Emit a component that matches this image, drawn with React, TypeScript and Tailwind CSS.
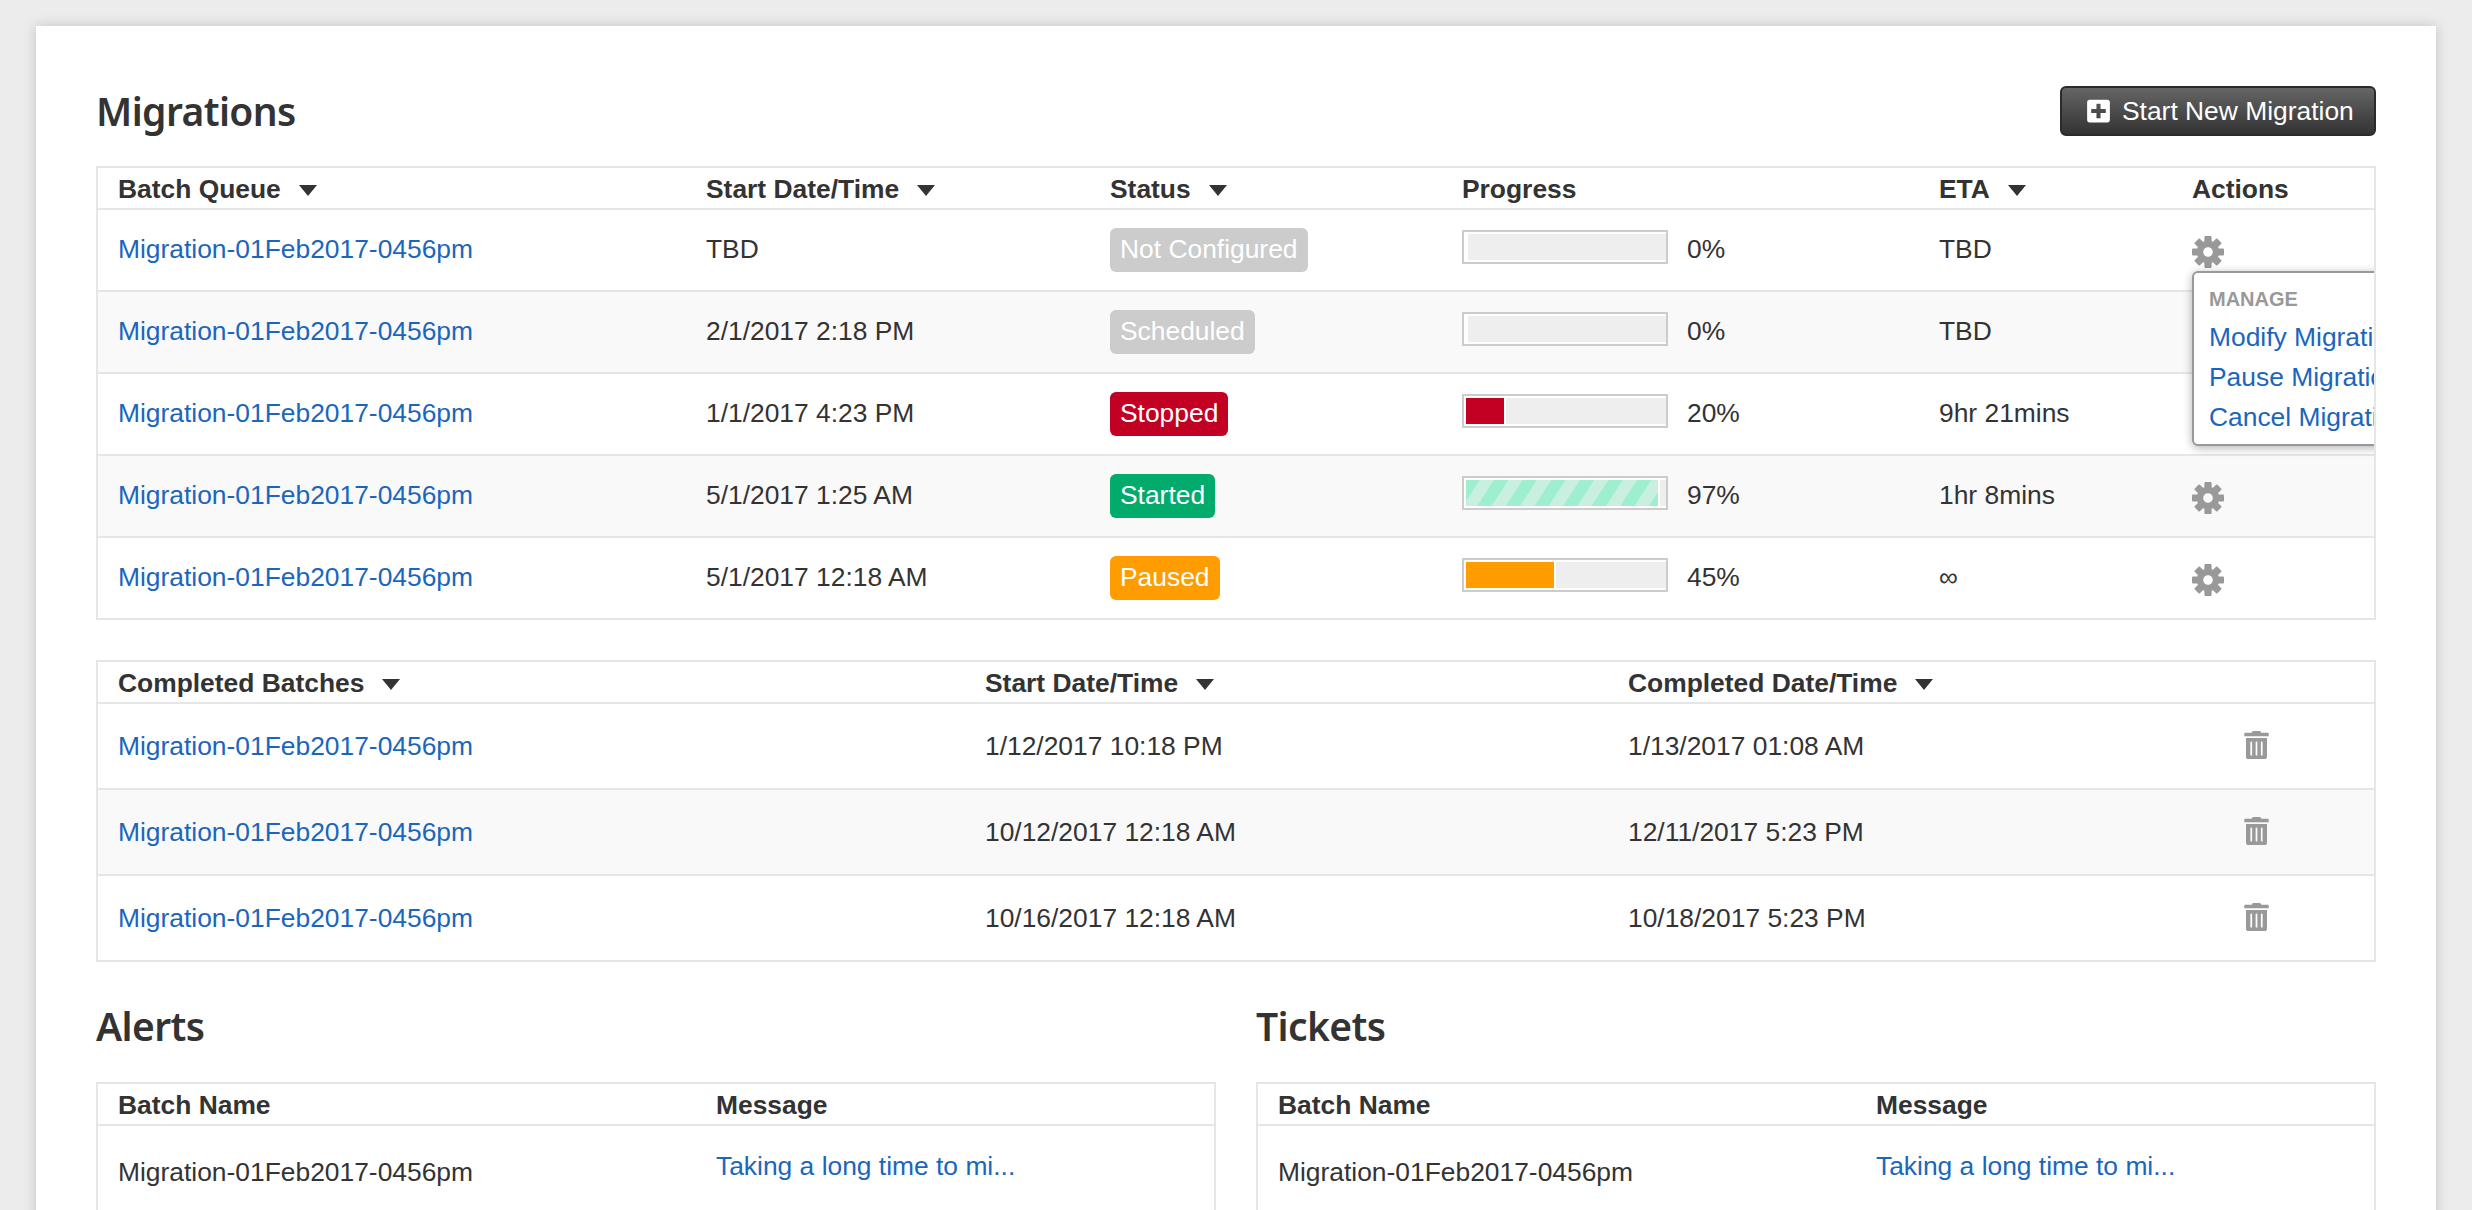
import React from "react";
import { FaTrashAlt, FaPlusSquare } from "react-icons/fa";

const NAME = "Migration-01Feb2017-0456pm";

function Caret() {
  return (
    <svg viewBox="0 0 18 11" className="ml-[18px] mt-[3px] h-[11px] w-[18px] shrink-0 fill-[#333333]">
      <path d="M0 0H18L9 11Z" />
    </svg>
  );
}

function Gear() {
  return (
    <svg viewBox="0 0 32 32" className="mt-[3px] h-[32px] w-[32px] fill-[#999999] stroke-[#999999]">
      <circle cx="16" cy="16" r="8" fill="none" strokeWidth="6.4" />
      <g stroke="none">
        {[0, 45, 90, 135, 180, 225, 270, 315].map((a) => (
          <rect key={a} x="12.4" y="0" width="7.2" height="8" rx="1" transform={`rotate(${a} 16 16)`} />
        ))}
      </g>
    </svg>
  );
}

function Head({ label, sort }: { label: string; sort?: boolean }) {
  return (
    <div className="flex items-center font-bold">
      <span>{label}</span>
      {sort ? <Caret /> : null}
    </div>
  );
}

const badgeClass: Record<string, string> = {
  "Not Configured": "bg-[#cccccc]",
  Scheduled: "bg-[#cccccc]",
  Stopped: "bg-[#c20024]",
  Started: "bg-[#00ab6b]",
  Paused: "bg-[#ff9d00]",
};

const fillClass: Record<string, string> = {
  "Not Configured": "bg-white",
  Scheduled: "bg-white",
  Stopped: "bg-[#c20024]",
  Started: "bg-[repeating-linear-gradient(123deg,#9eefcf_0px,#9eefcf_11px,#c8efe0_12px,#c8efe0_23px,#9eefcf_24px)]",
  Paused: "bg-[#ff9d00]",
};

const queue = [
  { start: "TBD", status: "Not Configured", pct: 0, eta: "TBD" },
  { start: "2/1/2017 2:18 PM", status: "Scheduled", pct: 0, eta: "TBD" },
  { start: "1/1/2017 4:23 PM", status: "Stopped", pct: 20, eta: "9hr 21mins" },
  { start: "5/1/2017 1:25 AM", status: "Started", pct: 97, eta: "1hr 8mins" },
  { start: "5/1/2017 12:18 AM", status: "Paused", pct: 45, eta: "∞" },
];

const done = [
  { start: "1/12/2017 10:18 PM", end: "1/13/2017 01:08 AM" },
  { start: "10/12/2017 12:18 AM", end: "12/11/2017 5:23 PM" },
  { start: "10/16/2017 12:18 AM", end: "10/18/2017 5:23 PM" },
];

function Progress({ status, pct }: { status: string; pct: number }) {
  return (
    <div className="flex items-center">
      <div className="mb-[6px] h-[34px] w-[206px] border-2 border-[#cccccc] bg-white py-[2px] pl-[2px]">
        <div className="h-[26px] w-full bg-[#eeeeee]">
          <div
            className={`h-full border-r-2 border-white ${fillClass[status]}`}
            style={{ width: `${pct}%` }}
          />
        </div>
      </div>
      <span className="ml-[19px] pb-[2px]">{pct}%</span>
    </div>
  );
}

function SmallTable({ message }: { message: string }) {
  return (
    <div className="h-[200px] border-2 border-[#e6e6e6]">
      <div className="grid h-[42px] grid-cols-[598px_1fr] items-center border-b-2 border-[#e6e6e6] pt-[2px] pl-5 font-bold">
        <div>Batch Name</div>
        <div>Message</div>
      </div>
      <div className="grid grid-cols-[598px_1fr] pl-5">
        <div className="pt-[31px]">{NAME}</div>
        <div className="pt-[25px] text-[#1a66bd]">{message}</div>
      </div>
    </div>
  );
}

export default function App() {
  return (
    <div className="h-[1210px] overflow-hidden bg-[#ececec] px-9 pt-[26px] font-['Liberation_Sans',Arial,sans-serif] text-[26.4px] leading-[30px] text-[#333333]">
      <div className="bg-white px-[60px] pt-[60px] shadow-[0_0_12px_rgba(0,0,0,0.18)]">
        <div className="mb-[30px] flex h-[50px] items-center justify-between">
          <h1 className="font-['Noto_Sans',sans-serif] text-[39px] leading-[50px] font-semibold tracking-[-0.6px] text-[#333333]">
            Migrations
          </h1>
          <button className="flex h-[50px] w-[316px] items-center rounded-[6px] border-2 border-[#2b2b2b] bg-gradient-to-b from-[#666666] to-[#333333] pl-[25px] text-white">
            <FaPlusSquare className="h-[26px] w-[23px]" />
            <span className="ml-[12px]">Start New Migration</span>
          </button>
        </div>

        <div className="relative overflow-hidden border-2 border-[#e6e6e6]">
          <div className="grid h-[42px] grid-cols-[588px_404px_352px_477px_253px_1fr] items-center border-b-2 border-[#e6e6e6] pt-[2px] pl-5">
            <Head label="Batch Queue" sort />
            <Head label="Start Date/Time" sort />
            <Head label="Status" sort />
            <Head label="Progress" />
            <Head label="ETA" sort />
            <Head label="Actions" />
          </div>
          {queue.map((r, i) => (
            <div
              key={r.status}
              className={`grid grid-cols-[588px_404px_352px_477px_253px_1fr] items-center pl-5 ${
                i === 4 ? "h-[80px]" : "h-[82px] border-b-2 border-[#e6e6e6]"
              } ${i % 2 === 1 ? "bg-[#f9f9f9]" : "bg-white"}`}
            >
              <div className="pb-[2px] text-[#1a66bd]">{NAME}</div>
              <div className="pb-[2px]">{r.start}</div>
              <div>
                <span className={`inline-flex h-[44px] items-center rounded-[6px] px-[10px] pb-[2px] text-white ${badgeClass[r.status]}`}>
                  {r.status}
                </span>
              </div>
              <Progress status={r.status} pct={r.pct} />
              <div className="pb-[2px]">{r.eta}</div>
              {i === 1 || i === 2 ? <div /> : <Gear />}
            </div>
          ))}
          <div className="absolute top-[103px] left-[2094px] h-[175px] w-[300px] rounded-[6px] border-2 border-[#999999] bg-white pt-[11px] pl-[15px] shadow-[0_2px_10px_rgba(0,0,0,0.3)]">
            <div className="h-[28px] text-[20px] font-bold text-[#999999]">MANAGE</div>
            <div className="pt-[5px] leading-[40px] text-[#1a66bd]">
              <div>Modify Migration</div>
              <div>Pause Migration</div>
              <div>Cancel Migration</div>
            </div>
          </div>
        </div>

        <div className="mt-10 border-2 border-[#e6e6e6]">
          <div className="grid h-[42px] grid-cols-[867px_643px_1fr] items-center border-b-2 border-[#e6e6e6] pt-[2px] pl-5">
            <Head label="Completed Batches" sort />
            <Head label="Start Date/Time" sort />
            <Head label="Completed Date/Time" sort />
          </div>
          {done.map((r, i) => (
            <div
              key={r.start}
              className={`grid grid-cols-[867px_643px_616px_1fr] items-center pl-5 ${
                i === 2 ? "h-[84px]" : "h-[86px] border-b-2 border-[#e6e6e6]"
              } ${i === 1 ? "bg-[#f9f9f9]" : "bg-white"}`}
            >
              <div className="text-[#1a66bd]">{NAME}</div>
              <div>{r.start}</div>
              <div>{r.end}</div>
              <FaTrashAlt className="mb-[2px] h-[28px] w-[25px] text-[#999999]" />
            </div>
          ))}
        </div>

        <div className="mt-[34px] grid grid-cols-2 gap-10 pb-10">
          <div>
            <h2 className="mb-[26px] h-[60px] font-['Noto_Sans',sans-serif] text-[39px] leading-[60px] font-semibold tracking-[-0.6px] text-[#333333]">
              Alerts
            </h2>
            <SmallTable message="Taking a long time to mi..." />
          </div>
          <div>
            <h2 className="mb-[26px] h-[60px] font-['Noto_Sans',sans-serif] text-[39px] leading-[60px] font-semibold tracking-[-0.6px] text-[#333333]">
              Tickets
            </h2>
            <SmallTable message="Taking a long time to mi..." />
          </div>
        </div>
      </div>
    </div>
  );
}
